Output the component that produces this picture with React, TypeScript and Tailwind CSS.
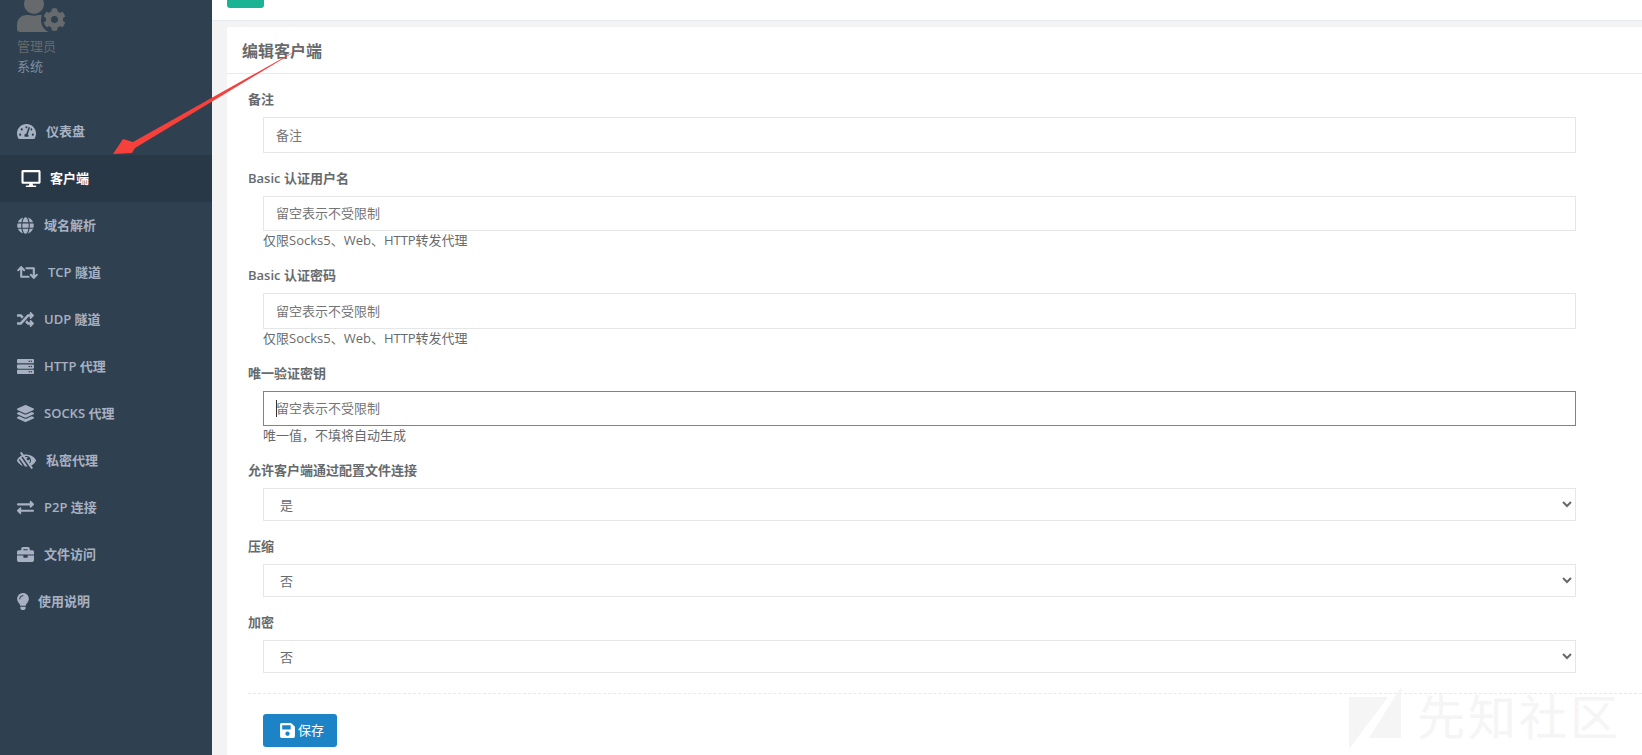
import type { IconType } from "react-icons";
import {
  FaBriefcase,
  FaCog,
  FaDesktop,
  FaExchangeAlt,
  FaGlobe,
  FaLayerGroup,
  FaLightbulb,
  FaLowVision,
  FaRandom,
  FaRetweet,
  FaSave,
  FaServer,
  FaTachometerAlt,
} from "react-icons/fa";

const fontStack = "font-['Open_Sans','Noto_Sans_CJK_SC',sans-serif]";

interface NavItem {
  label: string;
  icon: IconType;
  iconClass: string;
  active?: boolean;
}

const navItems: NavItem[] = [
  { label: "仪表盘", icon: FaTachometerAlt, iconClass: "w-[19px] mr-[10px]" },
  { label: "客户端", icon: FaDesktop, iconClass: "w-[20px] mr-[9px]", active: true },
  { label: "域名解析", icon: FaGlobe, iconClass: "w-[17px] mr-[10px]" },
  { label: "TCP 隧道", icon: FaRetweet, iconClass: "w-[21px] mr-[10px]" },
  { label: "UDP 隧道", icon: FaRandom, iconClass: "w-[17px] mr-[10px]" },
  { label: "HTTP 代理", icon: FaServer, iconClass: "w-[17px] mr-[10px]" },
  { label: "SOCKS 代理", icon: FaLayerGroup, iconClass: "w-[17px] mr-[10px]" },
  { label: "私密代理", icon: FaLowVision, iconClass: "w-[19px] mr-[10px]" },
  { label: "P2P 连接", icon: FaExchangeAlt, iconClass: "w-[17px] mr-[10px]" },
  { label: "文件访问", icon: FaBriefcase, iconClass: "w-[17px] mr-[10px]" },
  { label: "使用说明", icon: FaLightbulb, iconClass: "w-[12px] mr-[9px]" },
];

function AdminLogo() {
  return (
    <div className="relative h-[32px] w-[50px] text-[#676a6c]">
      <svg className="absolute left-0 top-0" width="50" height="32" viewBox="0 0 50 32" fill="currentColor">
        <circle cx="17" cy="4" r="10" />
        <path d="M0 29 V25 C0 18 5 15 10 15 H12 C15 16 19 16 22 15 H24 C27 15 30 16 32 18 V32 H3 C1 32 0 31 0 29 Z" />
        <circle cx="37.5" cy="20" r="13.5" fill="#2f4050" />
      </svg>
      <FaCog className="absolute left-[26px] top-[8px] h-[23px] w-[23px]" />
    </div>
  );
}

function Sidebar() {
  return (
    <aside className="w-[212px] shrink-0 bg-[#2f4050] text-[#a7b1c2]">
      <div className="h-[108px] overflow-hidden pl-[17px]">
        <AdminLogo />
        <div className="mt-[4px] text-[13px] leading-[20px] text-[#676a6c]">管理员</div>
        <div className="text-[13px] leading-[20px] text-[#7f8fa0]">系统</div>
      </div>
      <nav>
        {navItems.map((item) => {
          const Icon = item.icon;
          return (
            <div
              key={item.label}
              className={`flex h-[47px] items-center text-[13px] font-semibold ${
                item.active ? "bg-[#293846] pl-[21px] text-white" : "pl-[17px]"
              }`}
            >
              <Icon className={`${item.iconClass} h-[17px] shrink-0`} />
              <span>{item.label}</span>
            </div>
          );
        })}
      </nav>
    </aside>
  );
}

function FieldLabel({ children }: { children: string }) {
  return <label className="block text-[13px] font-semibold leading-[19px] text-[#676a6c]">{children}</label>;
}

function TextField({
  label,
  placeholder,
  help,
  focused,
  tall,
}: {
  label: string;
  placeholder: string;
  help?: string;
  focused?: boolean;
  tall?: boolean;
}) {
  return (
    <div className="pt-[16px]">
      <FieldLabel>{label}</FieldLabel>
      <div className="relative mt-[8px] ml-[15px] mr-[66px]">
        <input
          readOnly
          placeholder={placeholder}
          className={`block w-full border bg-white px-[12px] pb-[1px] text-[13px] outline-none placeholder:text-[#757575] ${
            tall ? "h-[36px]" : "h-[35px]"
          } ${focused ? "border-[#1ab394]" : "border-[#e5e6e7]"}`}
        />
        {focused && <span className="absolute left-[13px] top-[9px] h-[17px] w-px bg-[#333]" />}
      </div>
      {help && <p className="ml-[15px] text-[13px] leading-[19px] text-[#676a6c]">{help}</p>}
    </div>
  );
}

function SelectField({ label, value }: { label: string; value: string }) {
  return (
    <div className="pt-[16px]">
      <FieldLabel>{label}</FieldLabel>
      <select
        defaultValue={value}
        className="mt-[8px] ml-[15px] block h-[33px] w-[1313px] border border-[#e5e6e7] bg-white pl-[12px] text-[13px] text-[#676a6c] outline-none"
      >
        <option>是</option>
        <option>否</option>
      </select>
    </div>
  );
}

function Watermark() {
  return (
    <div className="absolute left-[1349px] top-[685px] flex h-[64px] items-center text-[#f5f5f5]">
      <svg width="52" height="64" viewBox="0 0 52 64" fill="currentColor">
        <path d="M0 12 H39 L0 64 Z" />
        <path d="M52 2 V53 H20 Z" />
      </svg>
      <span className="ml-[16px] text-[48px] leading-none tracking-[3px]">先知社区</span>
    </div>
  );
}

function Arrow() {
  return (
    <svg className="absolute left-0 top-0" width="330" height="170" viewBox="0 0 330 170">
      <path d="M306 45 L135 148 L132 153 L113 154 L123 139 L133 142 Z" fill="#f5403c" />
    </svg>
  );
}

export default function App() {
  return (
    <div className={`relative flex h-[755px] w-[1642px] overflow-hidden bg-[#f3f3f4] ${fontStack}`}>
      <Sidebar />
      <main className="min-w-0 flex-1">
        <div className="h-[21px] border-b border-[#e7eaec] bg-white pl-[15px]">
          <div className="h-[8px] w-[37px] rounded-b-[3px] bg-[#1ab394]" />
        </div>
        <section className="ml-[15px] mt-[6px] h-[728px] bg-white">
          <h5 className="flex h-[47px] items-center border-b border-[#e7eaec] pl-[15px] pt-[2px] text-[16px] font-semibold text-[#676a6c]">
            编辑客户端
          </h5>
          <form className="pl-[21px]">
            <TextField label="备注" placeholder="备注" tall />
            <TextField label="Basic 认证用户名" placeholder="留空表示不受限制" help="仅限Socks5、Web、HTTP转发代理" />
            <TextField label="Basic 认证密码" placeholder="留空表示不受限制" help="仅限Socks5、Web、HTTP转发代理" tall />
            <TextField label="唯一验证密钥" placeholder="留空表示不受限制" help="唯一值，不填将自动生成" focused />
            <SelectField label="允许客户端通过配置文件连接" value="是" />
            <SelectField label="压缩" value="否" />
            <SelectField label="加密" value="否" />
            <div className="mt-[20px] border-t border-dashed border-[#e7eaec]" />
            <button
              type="button"
              className="ml-[15px] mt-[20px] flex h-[33px] w-[74px] items-center rounded-[3px] bg-[#1c84c6] pl-[16px] text-[13px] text-white"
            >
              <FaSave className="mr-[2px] h-[17px] w-[17px]" />
              保存
            </button>
          </form>
        </section>
      </main>
      <Watermark />
      <Arrow />
    </div>
  );
}
